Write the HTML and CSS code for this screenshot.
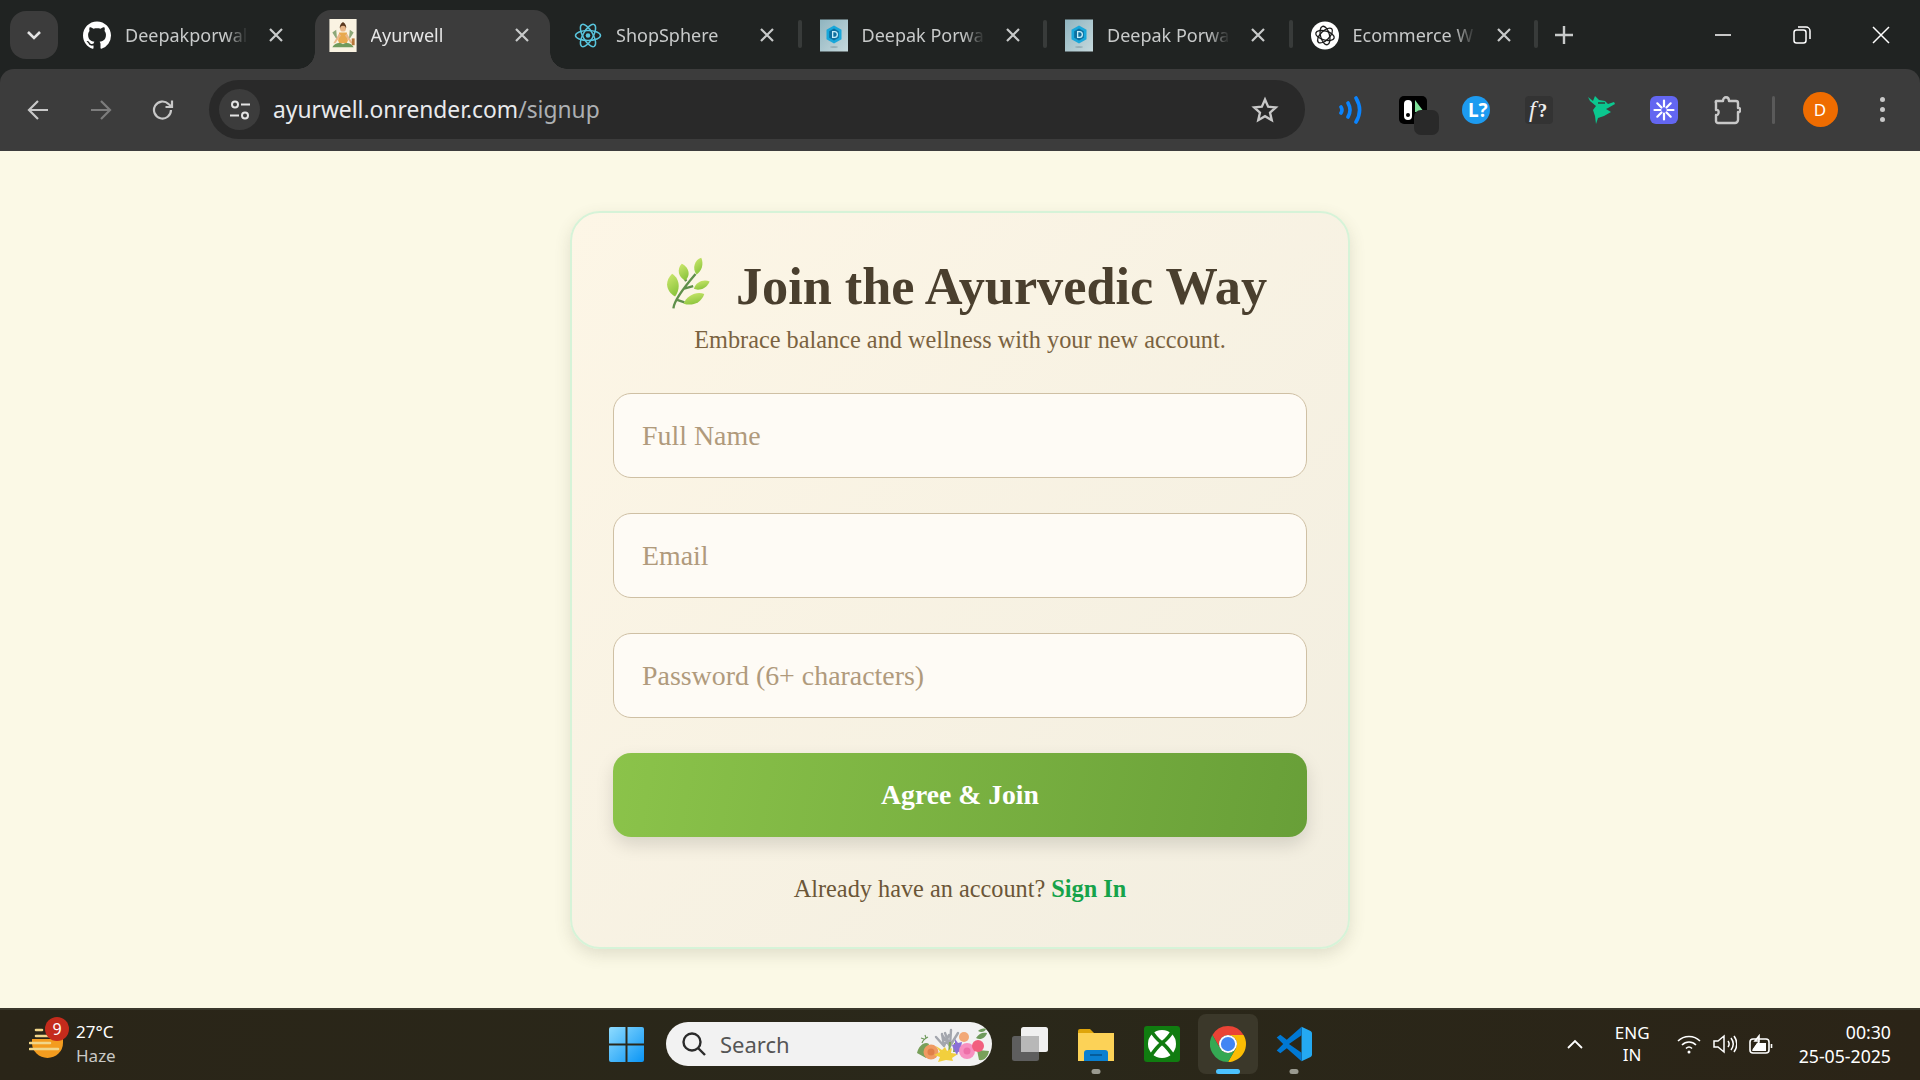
FILE: index.html

```html
<!DOCTYPE html>
<html>
<head>
  <title>Ayurwell</title>
  <link rel="stylesheet" href="styles.css">
</head>
<body>
  <svg class="defs" width="0" height="0">
    <symbol id="x" viewBox="0 0 16 16"><path d="M2 2l12 12M14 2L2 14" fill="none" stroke="#c8caca" stroke-width="2.2"/></symbol>
    <symbol id="dtile" viewBox="0 0 28 32">
      <defs>
        <linearGradient id="dbg" x1="0" y1="0" x2="1" y2="1"><stop offset="0" stop-color="#8fb4bf"/><stop offset="1" stop-color="#c6d9dd"/></linearGradient>
      </defs>
      <rect width="28" height="32" fill="url(#dbg)"/>
      <path d="M14 6l7.500 4.200v9.600L14 24l-7.500-4.200v-9.600z" fill="#19a7da"/>
      <path d="M14 9l4.800 2.700v6.600L14 21l-4.800-2.700v-6.600z" fill="#0d6f9f"/>
      <path d="M12 11.500h2.500a3.500 3.500 0 0 1 0 7H12zM13.300 12.800v4.400h1.200a2.200 2.200 0 0 0 0-4.400z" fill="#c5eefa"/>
      <ellipse cx="14" cy="27.5" rx="4" ry="0.8" fill="#8ca6ae"/>
    </symbol>
  </svg>

  <div class="tabstrip">
    <button class="tab-search"><svg width="16" height="10" viewBox="0 0 16 10"><path d="M2 2l6 6 6-6" fill="none" stroke="#e3e3e3" stroke-width="2.6"/></svg></button>

    <div class="tab">
      <svg class="favicon" viewBox="0 0 16 16"><path fill="#fff" d="M8 0C3.580 0 0 3.580 0 8c0 3.540 2.290 6.530 5.470 7.590.4.070.55-.17.55-.38 0-.19-.01-.82-.01-1.490-2.010.37-2.530-.49-2.690-.94-.09-.23-.48-.94-.82-1.130-.28-.15-.68-.52-.01-.53.63-.01 1.080.58 1.230.82.72 1.210 1.870.87 2.330.66.07-.52.28-.87.51-1.070-1.780-.2-3.640-.89-3.640-3.950 0-.87.31-1.590.82-2.150-.08-.2-.36-1.020.08-2.120 0 0 .67-.21 2.200.82.64-.18 1.320-.27 2-.27.68 0 1.360.09 2 .27 1.530-1.040 2.200-.82 2.200-.82.44 1.100.16 1.920.08 2.120.51.56.82 1.270.82 2.150 0 3.070-1.870 3.750-3.650 3.950.29.25.54.73.54 1.480 0 1.070-.01 1.930-.01 2.200 0 .21.15.46.55.38A8.013 8.013 0 0016 8c0-4.420-3.580-8-8-8z"/></svg>
      <span class="tab-title">Deepakporwal</span>
      <svg class="tab-close"><use href="#x"/></svg>
    </div>

    <div class="tab active">
      <svg class="favicon" viewBox="0 0 28 34">
        <rect width="28" height="34" fill="#faf3e2"/>
        <path d="M3 14l5 8-1-11zM25 14l-5 8 1-11z" fill="#8da878"/>
        <path d="M14 3c-3 2-4 5-3 7h6c1-2 0-5-3-7z" fill="#5b3a20"/>
        <circle cx="14" cy="10" r="3" fill="#e9b88a"/>
        <path d="M10 14h8l1 8-1 3h-8l-1-3z" fill="#e8a94e"/>
        <path d="M10 15l-6 10h2l6-8zM18 15l6 10h-2l-6-8z" fill="#e9b88a"/>
        <path d="M3 29c3-5 8-5 11-3 3-2 8-2 11 3z" fill="#6f9a5c"/>
        <rect x="23" y="20" width="3" height="7" fill="#b5773a"/>
      </svg>
      <span class="tab-title">Ayurwell</span>
      <svg class="tab-close"><use href="#x"/></svg>
    </div>

    <div class="tab sep">
      <svg class="favicon" viewBox="-14 -14 28 28" fill="none" stroke="#58c4dc" stroke-width="1.5">
        <ellipse rx="12.5" ry="5"/>
        <ellipse rx="12.5" ry="5" transform="rotate(60)"/>
        <ellipse rx="12.5" ry="5" transform="rotate(120)"/>
        <circle r="2.3" fill="#58c4dc" stroke="none"/>
      </svg>
      <span class="tab-title">ShopSphere</span>
      <svg class="tab-close"><use href="#x"/></svg>
    </div>

    <div class="tab sep">
      <svg class="favicon"><use href="#dtile"/></svg>
      <span class="tab-title">Deepak Porwa</span>
      <svg class="tab-close"><use href="#x"/></svg>
    </div>

    <div class="tab sep">
      <svg class="favicon"><use href="#dtile"/></svg>
      <span class="tab-title">Deepak Porwa</span>
      <svg class="tab-close"><use href="#x"/></svg>
    </div>

    <div class="tab sep">
      <svg class="favicon" viewBox="-14 -14 28 28">
        <circle r="14" fill="#fff"/>
        <g fill="none" stroke="#1c1c1c" stroke-width="1.3">
          <ellipse rx="9.5" ry="4.5" transform="rotate(15)"/>
          <ellipse rx="9.5" ry="4.5" transform="rotate(75)"/>
          <ellipse rx="9.5" ry="4.5" transform="rotate(135)"/>
        </g>
      </svg>
      <span class="tab-title">Ecommerce W</span>
      <svg class="tab-close"><use href="#x"/></svg>
    </div>

    <button class="new-tab"><svg width="18" height="18" viewBox="0 0 18 18"><path d="M9 0v18M0 9h18" stroke="#c8caca" stroke-width="2.4"/></svg></button>

    <div class="win-controls">
      <button class="win-btn"><svg width="16" height="16" viewBox="0 0 16 16"><path d="M0 8h16" stroke="#fff" stroke-width="1.5"/></svg></button>
      <button class="win-btn"><svg width="18" height="18" viewBox="0 0 18 18" fill="none" stroke="#fff" stroke-width="1.5"><rect x="1" y="4" width="12" height="13" rx="2.5"/><path d="M5 1h8a4 4 0 0 1 4 4v8"/></svg></button>
      <button class="win-btn"><svg width="18" height="18" viewBox="0 0 18 18"><path d="M1 1l16 16M17 1L1 17" stroke="#fff" stroke-width="1.5"/></svg></button>
    </div>
  </div>

  <div class="toolbar">
    <button class="nav-btn"><svg width="22" height="22" viewBox="0 0 22 22" fill="none" stroke="#c8c8c8" stroke-width="2.2"><path d="M21 11H2M11 2l-9 9 9 9"/></svg></button>
    <button class="nav-btn"><svg width="22" height="22" viewBox="0 0 22 22" fill="none" stroke="#7d7d7d" stroke-width="2.2"><path d="M1 11h19M11 2l9 9-9 9"/></svg></button>
    <button class="nav-btn"><svg width="22" height="22" viewBox="0 0 22 22" fill="none" stroke="#c8c8c8" stroke-width="2.2"><path d="M19 11a8.500 8.500 0 1 1-2.500-6L20 8"/><path d="M20 1.500V8h-6.500"/></svg></button>

    <div class="omnibox">
      <span class="site-info"><svg width="22" height="22" viewBox="0 0 22 22" fill="none" stroke="#e3e3e3" stroke-width="2"><circle cx="6" cy="5.500" r="3"/><path d="M12 5.500h9M1 16.500h9"/><circle cx="16" cy="16.500" r="3"/></svg></span>
      <span class="url">ayurwell.onrender.com<span class="url-path">/signup</span></span>
      <svg class="star" width="28" height="28" viewBox="0 0 24 24" fill="none" stroke="#c8c8c8" stroke-width="2"><path d="M12 3l2.700 6.100 6.600.7-5 4.400 1.500 6.500L12 17.300l-5.800 3.400 1.500-6.500-5-4.400 6.600-.7z"/></svg>
    </div>

    <div class="extensions">
      <span class="ext"><svg width="24" height="28" viewBox="0 0 24 28" fill="none" stroke="#0a84ff" stroke-width="3.6" stroke-linecap="round"><path d="M3 11c1.300 2 1.300 4 0 6M10 7c2.600 4.500 2.600 9.500 0 14M18 2c4.500 7.500 4.500 16.500 0 24"/></svg></span>
      <span class="ext ext-stack">
        <svg width="28" height="28" viewBox="0 0 28 28"><rect width="28" height="28" rx="5" fill="#000"/><rect x="5" y="4" width="8" height="20" rx="4" fill="#fff"/><circle cx="9" cy="19" r="2" fill="#000"/><path d="M16 4l9 12h-9z" fill="#7fe39a"/></svg>
        <span class="ext-badge"></span>
      </span>
      <span class="ext"><svg width="28" height="28" viewBox="0 0 28 28"><circle cx="14" cy="14" r="14" fill="#1d9bf0"/><text class="ext-l" x="6" y="21">L?</text></svg></span>
      <span class="ext"><svg width="28" height="28" viewBox="0 0 28 28"><rect width="28" height="28" rx="4" fill="#333"/><text class="ext-f" x="4" y="21">f<tspan class="ext-q" dx="2">?</tspan></text></svg></span>
      <span class="ext"><svg width="29" height="30" viewBox="0 0 29 30"><path d="M1 2l5 4 2-5 4 4 6 1 3 3 6-2 1 2-7 4-2 1 5 3-7 4-6 2-2 6-1-8-2-6 3-4-6-5z" fill="#0bc78f"/><path d="M11 8h7" stroke="#2b4a40" stroke-width="1.6"/></svg></span>
      <span class="ext"><svg width="28" height="28" viewBox="-14 -14 28 28"><rect x="-14" y="-14" width="28" height="28" rx="6" fill="#6366f1"/><g stroke="#fff" stroke-width="2.2" stroke-linecap="round"><path d="M0-9.500V-3.500M0 3.500V9.500M-9.500 0H-3.500M3.500 0H9.500M-6.700-6.700L-2.500-2.500M2.500 2.500L6.700 6.700M6.700-6.700L2.500-2.500M-2.500 2.500L-6.700 6.700"/></g></svg></span>
      <span class="ext"><svg width="28" height="30" viewBox="0 0 28 30" fill="none" stroke="#c8c8c8" stroke-width="2.4" stroke-linejoin="round"><path d="M3 6h7c0-5 6-5 6 0h7a2 2 0 0 1 2 2v5c3-1 3 5 0 4v8a3 3 0 0 1-3 3H5a2 2 0 0 1-2-2v-6c3 1 4-6 0-5V8a2 2 0 0 1 0-2z"/></svg></span>
    </div>

    <span class="tool-sep"></span>
    <span class="avatar">D</span>
    <button class="menu-btn"><i></i><i></i><i></i></button>
  </div>

  <main class="page">
    <form class="card">
      <h1 class="card-title">
        <svg class="leaf" viewBox="80 55 128 155">
          <defs>
            <linearGradient id="lf" x1="0" y1="0" x2="0.4" y2="1"><stop offset="0" stop-color="#cfe96f"/><stop offset="1" stop-color="#8ec63f"/></linearGradient>
          </defs>
          <path d="M99 208c2-22 30-60 66-102M108 182l24 8M128 150l30-8M137 127l-8-15" fill="none" stroke="#5f8f4a" stroke-width="7"/>
          <path d="M95 105c20 12 28 42 9 68C82 160 68 132 95 105z" fill="url(#lf)"/>
          <path d="M124 75c18 8 30 32 10 50-20-10-26-34-10-50z" fill="url(#lf)"/>
          <path d="M182 57c8 18 2 40-14 50-14-18-6-44 14-50z" fill="url(#lf)"/>
          <path d="M207 128c-10 24-34 28-47 22 6-22 30-30 47-22z" fill="url(#lf)"/>
          <path d="M191 165c-10 30-40 36-61 29 8-24 38-38 61-29z" fill="url(#lf)"/>
        </svg>
        <span>Join the Ayurvedic Way</span>
      </h1>
      <p class="card-sub">Embrace balance and wellness with your new account.</p>
      <input class="field" type="text" placeholder="Full Name">
      <input class="field" type="email" placeholder="Email">
      <input class="field" type="password" placeholder="Password (6+ characters)">
      <button class="submit" type="button">Agree &amp; Join</button>
      <p class="card-foot">Already have an account? <a href="#">Sign In</a></p>
    </form>
  </main>

  <footer class="taskbar">
    <div class="weather">
      <span class="weather-icon">
        <svg width="36" height="32" viewBox="0 0 36 32">
          <path d="M3 11H34V15A15.500 15 0 0 1 3 15z" fill="#f39c1f"/>
          <g stroke="#f1d68a" stroke-width="2.6" stroke-linecap="round"><path d="M7 2h6M7 8h20M1 15h20M1 21h28"/></g>
        </svg>
        <span class="badge">9</span>
      </span>
      <div class="weather-text">
        <div class="temp">27°C</div>
        <div class="haze">Haze</div>
      </div>
    </div>

    <svg class="start" width="35" height="35" viewBox="0 0 35 35">
      <defs>
        <linearGradient id="win" x1="0" y1="0" x2="1" y2="1"><stop offset="0" stop-color="#8fdcff"/><stop offset="1" stop-color="#0a95f5"/></linearGradient>
      </defs>
      <path d="M0 2a2 2 0 0 1 2-2h14.500v16.500H0zM18.500 0H33a2 2 0 0 1 2 2v14.500H18.500zM0 18.500h16.500V35H2a2 2 0 0 1-2-2zM18.500 18.500H35V33a2 2 0 0 1-2 2H18.500z" fill="url(#win)"/>
    </svg>

    <div class="search">
      <svg width="24" height="24" viewBox="0 0 24 24" fill="none" stroke="#2b2b2b" stroke-width="2.4"><circle cx="10" cy="10" r="8.500"/><path d="M16 16l7 7"/></svg>
      <span class="search-text">Search</span>
      <svg class="flowers" width="74" height="36" viewBox="0 0 74 36">
        <path d="M1 27c2-8 8-12 12-9l-3 14zM73 25c-1 6-5 10-10 9l-2-10z" fill="#78a05a"/>
        <path d="M60 12c3-5 7-6 11-5-1 4-6 8-11 5zM62 5c2-2 5-3 8-2-1 3-5 4-8 2z" fill="#6f9a5c"/>
        <path d="M6 17c1-3 4-5 6-6M8 13l-3-1M10 12l-1-3" stroke="#6f9a5c" stroke-width="1.2" fill="none"/>
        <g stroke="#a3a6ad" stroke-width="2.4" stroke-linecap="round"><path d="M28 20l-8-9M28 20l-2-12M28 20l5-11M34 20L26 9M34 20l1-16M34 20l8-13M34 20L29 7"/></g>
        <path d="M33 28l1-12M38 26l1-9" stroke="#7ea652" stroke-width="2"/>
        <circle cx="15" cy="26" r="7.5" fill="#ef9a62"/>
        <circle cx="15" cy="26" r="3.5" fill="#e07f48"/>
        <path d="M20 20l6 4 3-3 2 4 5-3-1 5 7 1-6 4 1 3-7-1-8 2 2-5-6-2 6-3z" fill="#f2cf3d"/>
        <path d="M39 13l3 4 4-1-1 5 2 4-5 1-1 3-3-5-2-5 3-1z" fill="#8a6fd6"/>
        <circle cx="48" cy="11" r="5" fill="#f2a877"/>
        <circle cx="51" cy="25" r="8" fill="#f78fc0"/>
        <circle cx="51" cy="25" r="3.5" fill="#ee6fa8"/>
        <circle cx="62" cy="20" r="6" fill="#f25f7e"/>
      </svg>
    </div>

    <div class="apps">
      <span class="app">
        <svg width="36" height="34" viewBox="0 0 36 34"><rect y="9" width="27" height="25" rx="2.5" fill="#5e5e5e"/><rect x="9" width="27" height="25" rx="2.5" fill="#f0f0f0"/><rect x="9" y="9" width="18" height="16" fill="#b8b8b8"/></svg>
      </span>
      <span class="app dot">
        <svg width="36" height="33" viewBox="0 0 36 33"><path d="M0 3a2 2 0 0 1 2-2h10l4 4H0z" fill="#dfa50b"/><path d="M0 5h36v28H0z" fill="#fcd257"/><path d="M6 25a3 3 0 0 1 3-3h18a3 3 0 0 1 3 3v8H6z" fill="#0a7fd0"/><path d="M12 27h12" stroke="#04508a" stroke-width="1.5"/></svg>
      </span>
      <span class="app">
        <svg width="36" height="36" viewBox="-18 -18 36 36"><rect x="-18" y="-18" width="36" height="36" rx="3" fill="#107c10"/><circle r="14" fill="#fff"/><path d="M-11-14C-8-8-4-4 0-1 4-4 8-8 11-14M-12 13C-8 7-4 2 0-1 4 2 8 7 12 13" fill="none" stroke="#107c10" stroke-width="3.6"/></svg>
      </span>
      <span class="app running">
        <svg width="36" height="36" viewBox="0 0 48 48"><path d="M24 0a24 24 0 0 1 20.780 12H24a12 12 0 0 0-10.390 18L3.200 12A24 24 0 0 1 24 0z" fill="#ea4335"/><path d="M44.780 12A24 24 0 0 1 24 48l10.390-18A12 12 0 0 0 24 12z" fill="#fbbc04"/><path d="M3.200 12l10.410 18a12 12 0 0 0 20.780 0L24 48A24 24 0 0 1 3.200 12z" fill="#34a853"/><circle cx="24" cy="24" r="12" fill="#fff"/><circle cx="24" cy="24" r="9.500" fill="#4285f4"/></svg>
      </span>
      <span class="app dot">
        <svg width="36" height="36" viewBox="0 0 100 100"><path d="M71 2L96 14q4 2 4 6v60q0 4-4 6L71 98z" fill="#24a9f2"/><path d="M71 2v24L36 50l35 24v24L30 62 12 76 2 68l18-18L2 32l10-8 18 14z" fill="#0078d4"/></svg>
      </span>
    </div>

    <div class="tray">
      <svg class="tray-chevron" width="16" height="10" viewBox="0 0 16 10"><path d="M1 9l7-7 7 7" fill="none" stroke="#fff" stroke-width="1.8"/></svg>
      <div class="lang">ENG<br>IN</div>
      <div class="tray-icons">
        <svg width="24" height="20" viewBox="0 0 24 20" fill="none" stroke="#fff" stroke-width="1.6"><path d="M1 7c6-6 16-6 22 0M5 11c4-4 10-4 14 0M9 14.500c2-2 4-2 6 0"/><circle cx="12" cy="18" r="1.500" fill="#fff" stroke="none"/></svg>
        <svg width="24" height="20" viewBox="0 0 24 20" fill="none" stroke="#fff" stroke-width="1.5"><path d="M1 7h4l6-5v16l-6-5H1zM15 7c1.500 2 1.500 4 0 6M18 4c3 4 3 8 0 12M21 2c3.500 5 3.500 11 0 16"/></svg>
        <svg width="24" height="20" viewBox="0 0 24 20" fill="none" stroke="#fff" stroke-width="1.6"><rect x="1" y="5" width="19" height="14" rx="3"/><path d="M22.500 10v4"/><path d="M4 16l6-8v-6l-4 5h4"/><path d="M3 17l5-8h9v8z" fill="#fff" stroke="none"/></svg>
      </div>
      <div class="clock">00:30<br>25-05-2025</div>
    </div>
  </footer>
</body>
</html>
```

FILE: styles.css

```css
* { box-sizing: border-box; }
html, body { margin: 0; height: 100%; }
body { width: 1920px; height: 1080px; overflow: hidden; display: flex; flex-direction: column; background: #202322; font-family: "Noto Sans", sans-serif; }
button { background: none; border: none; padding: 0; display: flex; align-items: center; justify-content: center; }
.defs { position: absolute; }

.tabstrip { height: 69px; flex: none; display: flex; background: #202322; overflow: hidden; }
.tab-search { width: 48px; height: 48px; margin: 11px 6px 0 10px; border-radius: 16px; background: #3c3c3c; }
.tab { position: relative; width: 245.5px; height: 59px; margin-top: 10px; padding: 0 0 9px 19px; display: flex; align-items: center; flex: none; }
.tab.active { width: 235.5px; margin-left: 5px; margin-right: 5px; padding-left: 14px; background: #3c3c3c; border-radius: 16px 16px 0 0; }
.tab.active::before, .tab.active::after { content: ""; position: absolute; bottom: 0; width: 17px; height: 17px; }
.tab.active::before { left: -17px; background: radial-gradient(circle at 0 0, transparent 16.5px, #3c3c3c 17px); }
.tab.active::after { right: -17px; background: radial-gradient(circle at 100% 0, transparent 16.5px, #3c3c3c 17px); }
.tab.sep::after { content: ""; position: absolute; right: -1px; top: 10px; width: 4px; height: 28px; border-radius: 2px; background: #383b3a; }
.favicon { width: 28px; height: 33px; flex: none; }
.tab-title { width: 123px; margin-left: 14px; flex: none; overflow: hidden; white-space: nowrap; font-size: 18px; color: #c8caca; -webkit-mask-image: linear-gradient(90deg, #000 82%, transparent 100%); mask-image: linear-gradient(90deg, #000 82%, transparent 100%); }
.tab.active .tab-title { color: #e6e6e6; }
.tab-close { width: 16px; height: 16px; margin-left: 20px; flex: none; }
.new-tab { width: 36px; height: 48px; margin: 11px 0 0 9px; }
.win-controls { margin-left: auto; display: flex; }
.win-btn { width: 79px; height: 58px; margin-top: 6px; }

.toolbar { height: 82px; flex: none; display: flex; align-items: center; padding: 0 0 1px 7px; background: #3c3c3c; border-radius: 14px 14px 0 0; }
.nav-btn { width: 62.5px; height: 50px; }
.omnibox { width: 1096px; height: 59px; margin-left: 14.5px; padding: 0 26px 0 10px; display: flex; align-items: center; background: #292929; border-radius: 30px; }
.site-info { width: 41px; height: 41px; display: flex; align-items: center; justify-content: center; background: #3c3c3c; border-radius: 50%; }
.url { margin-left: 13px; font-size: 22.8px; color: #e8eaed; }
.url-path { color: #adb0b3; }
.star { margin-left: auto; }
.extensions { display: flex; margin-left: 14px; }
.ext { position: relative; width: 62.8px; height: 36px; display: flex; align-items: center; justify-content: center; }
.ext-badge { position: absolute; left: 32px; top: 18px; width: 25px; height: 25px; background: #292929; border-radius: 7px; }
.ext-l { font: bold 19px "Noto Sans", sans-serif; fill: #fff; }
.ext-f { font: italic 24px "Liberation Serif", serif; fill: #eee; }
.ext-q { font: bold 19px "Liberation Serif", serif; }
.tool-sep { width: 3px; height: 28px; margin-left: 13px; background: #5a5a5a; border-radius: 2px; }
.avatar { width: 35px; height: 35px; margin-left: 28px; display: flex; align-items: center; justify-content: center; background: #ef6c00; color: #fff; border-radius: 50%; font-size: 17px; }
.menu-btn { width: 36px; height: 36px; margin-left: 27px; flex-direction: column; gap: 5px; }
.menu-btn i { width: 5px; height: 5px; background: #c8c8c8; border-radius: 50%; }

.page { height: 857px; flex: none; display: flex; align-items: center; justify-content: center; background: #fbf9e6; font-family: "Liberation Serif", serif; }
.card { width: 780px; height: 738px; padding: 43px 41px 0; display: flex; flex-direction: column; align-items: stretch; background: linear-gradient(135deg, #fdf6e6, #f2eee0); border: 2px solid #d6f3d8; border-radius: 30px; box-shadow: 0 6px 16px rgba(90, 90, 60, .16); }
.card-title { margin: 0; padding-left: 14px; display: flex; align-items: center; justify-content: center; font-size: 52.3px; font-weight: bold; color: #4a3f2e; }
.leaf { width: 43px; height: 52px; margin: -6px 26px 0 0; }
.card-sub { margin: 10.5px 0 39px; text-align: center; font-size: 24.3px; color: #7a6240; }
.field { height: 85px; margin-bottom: 35px; padding: 0 28px; background: #fefbf5; border: 1.5px solid #cfc0a4; border-radius: 18px; font: 27.9px "Liberation Serif", serif; color: #4a3f2e; }
.field::placeholder { color: #b09a7c; opacity: 1; }
.submit { height: 84px; background: linear-gradient(100deg, #8bc34a, #689f38); color: #fff; border-radius: 18px; font: bold 27.7px "Liberation Serif", serif; box-shadow: 0 8px 18px rgba(0, 0, 0, .13); }
.card-foot { margin: 38px 0 0; text-align: center; font-size: 24.3px; color: #6b5637; }
.card-foot a { color: #16a34a; font-weight: bold; text-decoration: none; }

.taskbar { height: 72px; flex: none; display: flex; align-items: center; padding-bottom: 2px; background: linear-gradient(90deg, #2a2518, #2a281a 50%, #2b2417); border-top: 2px solid #3a382c; color: #fff; }
.weather { width: 609px; flex: none; padding-left: 29px; display: flex; align-items: center; }
.weather-icon { position: relative; width: 36px; height: 32px; }
.badge { position: absolute; left: 16px; top: -11px; width: 24px; height: 24px; display: flex; align-items: center; justify-content: center; background: #c42b1c; border-radius: 50%; font-size: 16px; }
.weather-text { margin-left: 11px; font-size: 17px; line-height: 24px; }
.haze { color: #c9c9c6; }
.start { flex: none; margin-right: 22px; }
.search { width: 326px; height: 44px; flex: none; padding-left: 16px; display: flex; align-items: center; background: #f2f2f2; border-radius: 22px; }
.search-text { margin-left: 14px; font-size: 22px; color: #555; }
.flowers { margin-left: auto; margin-right: 2px; }
.apps { display: flex; gap: 6px; margin-left: 8px; }
.app { position: relative; width: 60px; height: 60px; display: flex; align-items: center; justify-content: center; border-radius: 8px; }
.app.running { background: #3b382a; }
.app.running::after, .app.dot::after { content: ""; position: absolute; bottom: 0; left: 50%; transform: translateX(-50%); height: 5px; border-radius: 3px; }
.app.running::after { width: 24px; background: #4cc2ff; }
.app.dot::after { width: 9px; background: #9a9a90; }
.tray { margin-left: auto; padding-right: 29px; display: flex; align-items: center; }
.lang { width: 35px; margin-left: 32px; text-align: center; font-size: 17px; line-height: 22px; white-space: nowrap; display: flex; flex-direction: column; align-items: center; }
.tray-icons { margin-left: 27px; display: flex; gap: 12px; }
.clock { margin-left: 26px; text-align: right; font-size: 17.7px; line-height: 24px; }
```
